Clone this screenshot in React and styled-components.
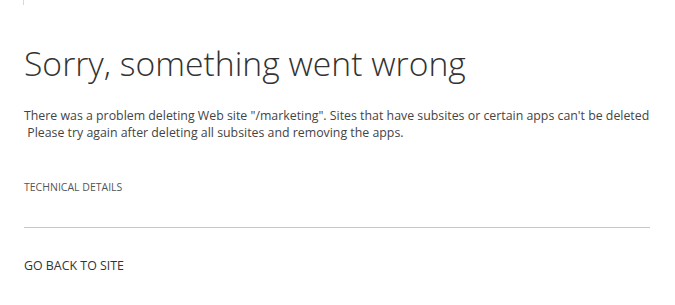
import React from 'react';
import styled, { createGlobalStyle } from 'styled-components';

const GlobalStyle = createGlobalStyle`
  html, body {
    margin: 0;
    padding: 0;
    background: #ffffff;
  }
  body {
    font-family: "Open Sans", "Liberation Sans", sans-serif;
  }
`;

const Page = styled.div`
  width: 675px;
  height: 305px;
  box-sizing: border-box;
  padding: 0 25px 0 24px;
  position: relative;
  overflow: hidden;
`;

const Tick = styled.div`
  position: absolute;
  left: 23px;
  top: 0;
  width: 1px;
  height: 5px;
  background: #d8d8d8;
`;

const Title = styled.h1`
  margin: 0;
  padding-top: 41px;
  font-family: "Open Sans", sans-serif;
  font-weight: 300;
  font-size: 33.7px;
  line-height: 44px;
  color: #333333;
  letter-spacing: 0;
`;

const Message = styled.p`
  margin: 22px 0 0;
  font-size: 12.35px;
  line-height: 17px;
  color: #444444;
`;

const Details = styled.div`
  margin-top: 39px;
  font-size: 10.5px;
  line-height: 14px;
  color: #555555;
  text-transform: uppercase;
`;

const Divider = styled.hr`
  margin: 33px 0 0;
  border: 0;
  border-top: 1px solid #c6c6c6;
`;

const BackLink = styled.a`
  display: block;
  margin-top: 29px;
  font-size: 12.4px;
  line-height: 17px;
  color: #333333;
  text-decoration: none;
  text-transform: uppercase;
`;

export default function App() {
  return (
    <>
      <GlobalStyle />
      <Page>
        <Tick />
        <Title>Sorry, something went wrong</Title>
        <Message>
          There was a problem deleting Web site "/marketing". Sites that have subsites or certain apps can't be deleted
          <br />
          {'\u00a0'}Please try again after deleting all subsites and removing the apps.
        </Message>
        <Details>Technical Details</Details>
        <Divider />
        <BackLink href="#">Go back to site</BackLink>
      </Page>
    </>
  );
}
